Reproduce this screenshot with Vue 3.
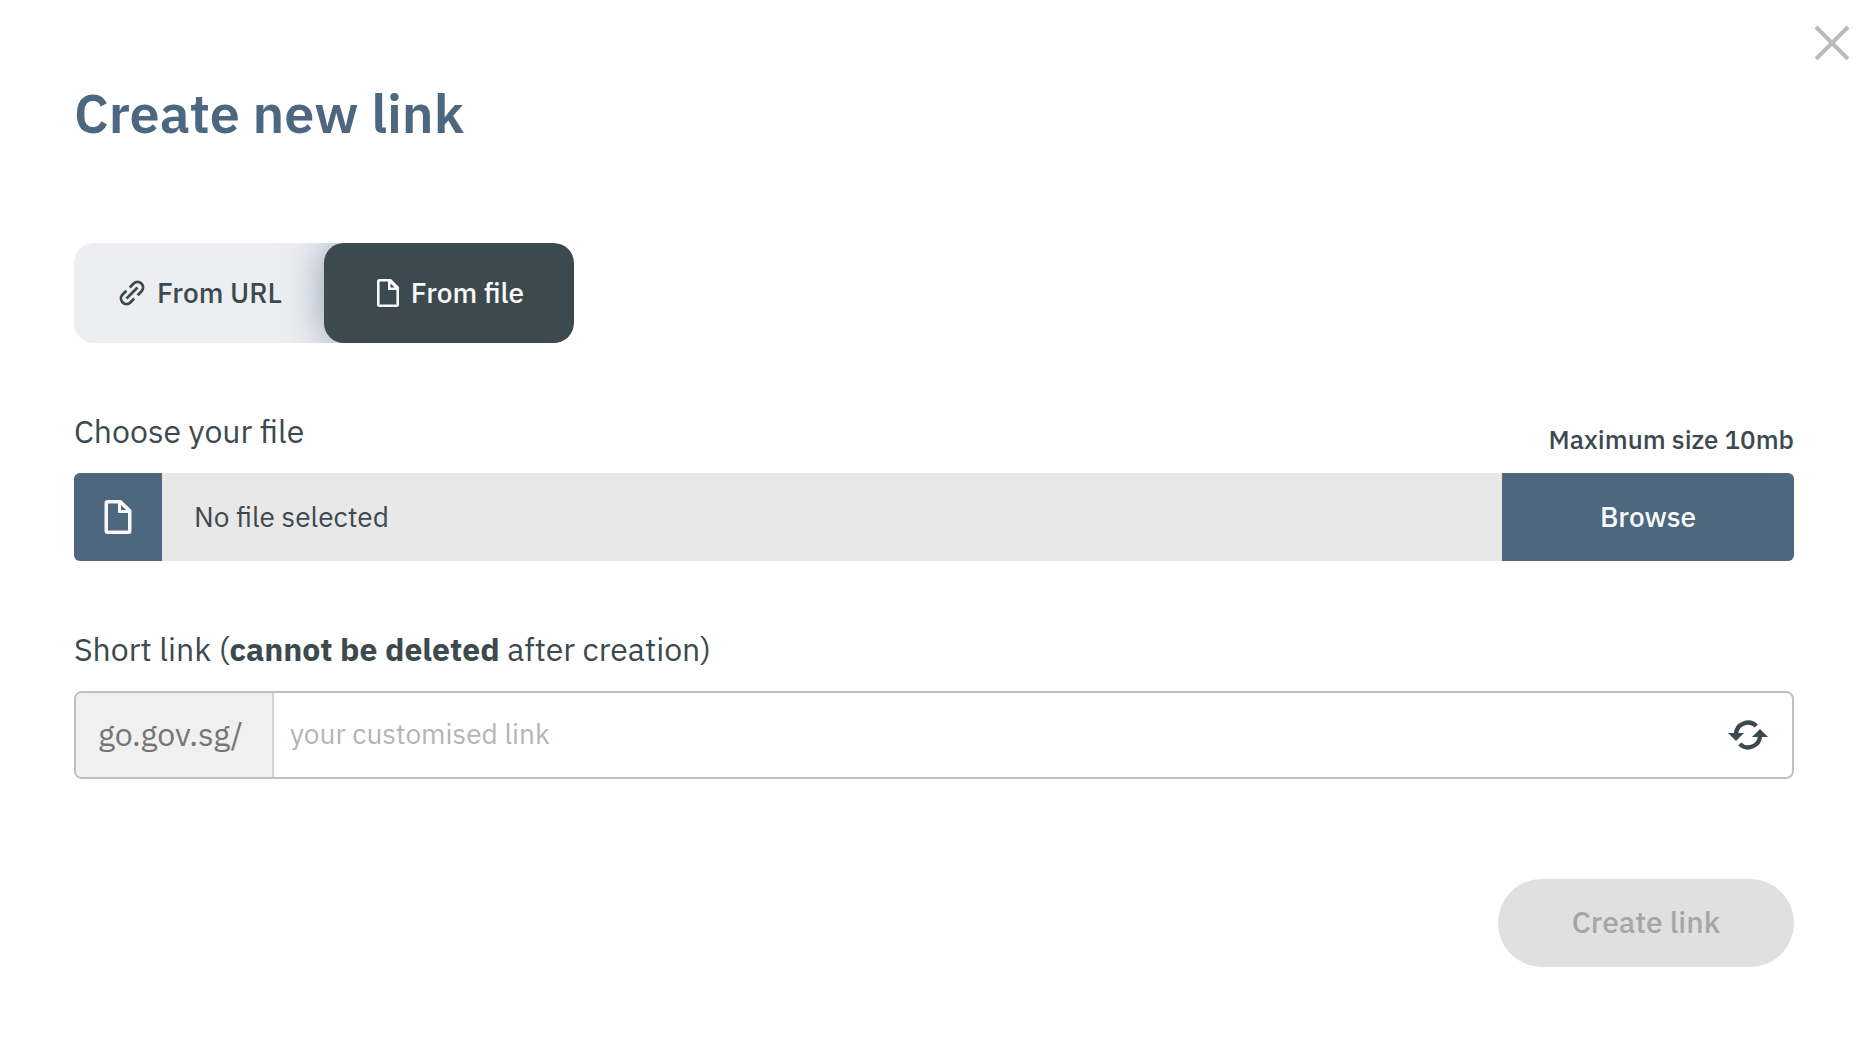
<script setup>
import { ref } from 'vue'

const mode = ref('file')
const shortLink = ref('')
</script>

<template>
  <main class="dialog">
    <button class="close" type="button" aria-label="Close">
      <svg width="36" height="36" viewBox="0 0 36 36" aria-hidden="true">
        <path d="M2 2 34 34M34 2 2 34" fill="none" stroke="#bbb" stroke-width="4" />
      </svg>
    </button>

    <h1>Create new link</h1>

    <div class="toggle">
      <button type="button" :class="{ active: mode === 'url' }" @click="mode = 'url'">
        <svg width="26" height="26" viewBox="0 0 26 26" fill="none" stroke="currentColor" stroke-width="2.8" aria-hidden="true">
          <path d="M7.5 18.5 18.500 7.500M10.800 7.400 14.600 3.600A5.300 5.300 0 0 1 22.400 11.400L18.600 15.200M7.400 10.800 3.600 14.600A5.300 5.300 0 0 0 11.400 22.400L15.200 18.600" />
        </svg>
        <span>From URL</span>
      </button>
      <button type="button" :class="{ active: mode === 'file' }" @click="mode = 'file'">
        <svg width="22" height="28" viewBox="0 0 22 28" aria-hidden="true">
          <path fill="currentColor" fill-rule="evenodd" d="M2.5 0H14L22 8V25.5A2.5 2.5 0 0 1 19.5 28H2.5A2.5 2.5 0 0 1 0 25.5V2.5A2.5 2.5 0 0 1 2.5 0ZM2.6 2.6V25.4H19.4V11H11V2.6ZM13.5 4.5V8.5H17.5Z" />
        </svg>
        <span>From file</span>
      </button>
    </div>

    <section class="field">
      <div class="caption">
        <label for="browse">Choose your file</label>
        <span class="limit">Maximum size 10mb</span>
      </div>
      <div class="file-row">
        <span class="file-icon">
          <svg width="28" height="34" viewBox="0 0 28 34" aria-hidden="true">
            <path fill="currentColor" fill-rule="evenodd" d="M3 0H17L27.5 10V31A3 3 0 0 1 24.5 34H3.5A3 3 0 0 1 .5 31V3A3 3 0 0 1 3.5 0ZM4 3.5V30.5H24V13H14V3.5ZM17 5V10H22Z" />
          </svg>
        </span>
        <output class="file-name" for="browse">No file selected</output>
        <button id="browse" class="browse" type="button">Browse</button>
      </div>
    </section>

    <section class="field">
      <div class="caption">
        <label for="short-link">Short link (<strong>cannot be deleted</strong> after creation)</label>
      </div>
      <div class="link-row">
        <span class="prefix">go.gov.sg/</span>
        <input id="short-link" v-model="shortLink" type="text" placeholder="your customised link" />
        <button class="refresh" type="button" aria-label="Generate a random link">
          <svg width="40" height="30" viewBox="0 0 40 30" aria-hidden="true">
            <g fill="none" stroke="currentColor" stroke-width="4.4">
              <path d="M28.3 6A12 12 0 0 0 8 14" />
              <path d="M11.7 24A12 12 0 0 0 32 16" />
            </g>
            <path fill="currentColor" d="M0 13H16L8 21ZM24 17H40L32 9Z" />
          </svg>
        </button>
      </div>
    </section>

    <div class="actions">
      <button class="create" type="submit" disabled>Create link</button>
    </div>
  </main>
</template>

<style>
body {
  background: #fff;
}
</style>

<style scoped>
.dialog {
  position: relative;
  box-sizing: border-box;
  padding: 77px 81px 64px 74px;
  color: #3c4a4f;
  font-family: "IBM Plex Sans", Roboto, sans-serif;
}

button,
input {
  margin: 0;
  padding: 0;
  border: 0;
  background: none;
  color: inherit;
  font-family: inherit;
}

svg {
  display: block;
  flex: none;
}

.close {
  position: absolute;
  top: 25px;
  right: 25px;
}

h1 {
  margin: 0 0 94px;
  color: #4c677f;
  font-size: 54px;
  font-weight: 600;
  line-height: 72px;
}

.toggle {
  display: flex;
  width: 500px;
  overflow: hidden;
  border-radius: 20px;
  background: #edeef2;
}

.toggle button {
  display: flex;
  flex: 1;
  align-items: center;
  justify-content: center;
  gap: 12px;
  height: 100px;
  padding-left: 3px;
  border-radius: 20px;
  font-size: 28px;
  font-weight: 500;
}

.toggle span {
  padding-bottom: 2px;
}

.toggle .active {
  background: #3c4a4f;
  box-shadow: 0 0 40px rgba(76, 103, 138, 0.6);
  color: #f9f9f9;
}

.field {
  margin-top: 65px;
}

.caption {
  display: flex;
  align-items: flex-end;
  justify-content: space-between;
  margin-bottom: 19px;
  font-size: 32px;
  line-height: 46px;
}

.limit {
  font-size: 26px;
  font-weight: 500;
  line-height: 30px;
}

.file-row {
  display: flex;
  height: 88px;
  overflow: hidden;
  border-radius: 6px;
  background: #e8e8e8;
}

.file-icon {
  display: flex;
  align-items: center;
  justify-content: center;
  width: 88px;
  background: #4c677f;
  color: #f9f9f9;
}

.file-name {
  flex: 1;
  padding-left: 32px;
  font-size: 28px;
  line-height: 88px;
}

.browse {
  width: 292px;
  padding-bottom: 2px;
  background: #4c677f;
  color: #f9f9f9;
  font-size: 28px;
  font-weight: 500;
}

.link-row {
  display: flex;
  box-sizing: border-box;
  height: 88px;
  overflow: hidden;
  border: 2px solid #c0c0c0;
  border-radius: 8px;
}

.prefix {
  box-sizing: border-box;
  width: 198px;
  padding-left: 22px;
  border-right: 2px solid #d4d4d4;
  background: #f0f0f0;
  color: #767676;
  font-size: 32px;
  line-height: 82px;
}

.link-row input {
  flex: 1;
  min-width: 0;
  padding: 0 0 3px 16px;
  font-size: 28px;
}

.link-row input::placeholder {
  color: #b1b6b8;
  opacity: 1;
}

.refresh {
  padding: 0 24px;
}

.actions {
  display: flex;
  justify-content: flex-end;
  margin-top: 100px;
}

.create {
  width: 296px;
  height: 88px;
  padding-bottom: 3px;
  border-radius: 44px;
  background: #e0e0e0;
  color: #a6a6a6;
  font-size: 30px;
  font-weight: 500;
}
</style>
